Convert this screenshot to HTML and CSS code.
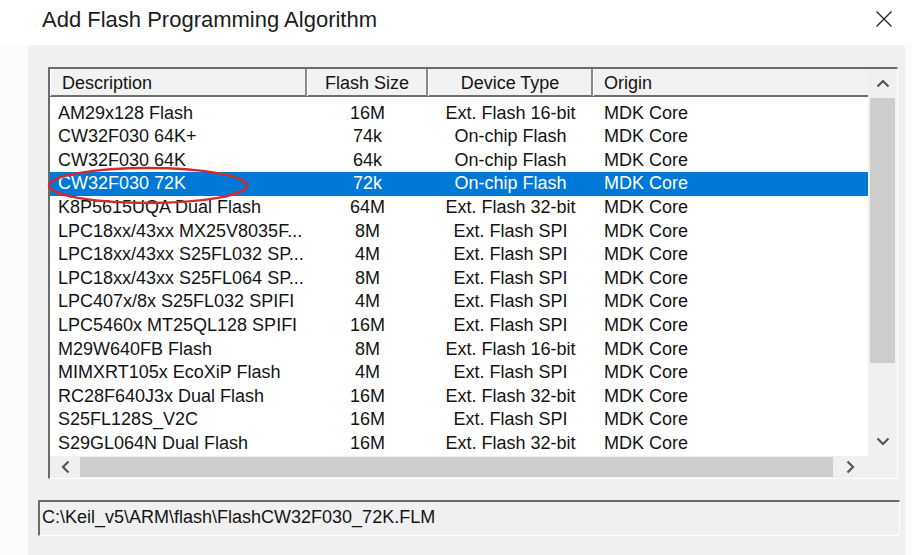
FILE: index.html
```html
<!DOCTYPE html>
<html>
<head>
<meta charset="utf-8">
<link rel="stylesheet" href="styles.css">
</head>
<body>
<div class="window">
  <div class="titlebar">
    <span class="title">Add Flash Programming Algorithm</span>
    <svg class="close" width="18" height="18" viewBox="0 0 18 18"><path d="M1.5 1.5 L16.5 16.5 M16.5 1.5 L1.5 16.5" stroke="#2b2b2b" stroke-width="1.4" fill="none"/></svg>
  </div>
  <div class="panel">
    <div class="listbox">
      <div class="lv-top">
        <div class="lv-content">
          <div class="lv-header">
            <div class="hcell c-desc">Description</div>
            <div class="hcell c-center">Flash Size</div>
            <div class="hcell c-center">Device Type</div>
            <div class="hcell c-origin">Origin</div>
          </div>
          <div class="lv-rows">
            <div class="row"><span class="c-desc">AM29x128 Flash</span><span class="c-center">16M</span><span class="c-center">Ext. Flash 16-bit</span><span class="c-origin">MDK Core</span></div>
            <div class="row"><span class="c-desc">CW32F030 64K+</span><span class="c-center">74k</span><span class="c-center">On-chip Flash</span><span class="c-origin">MDK Core</span></div>
            <div class="row"><span class="c-desc">CW32F030 64K</span><span class="c-center">64k</span><span class="c-center">On-chip Flash</span><span class="c-origin">MDK Core</span></div>
            <div class="row selected"><span class="c-desc">CW32F030 72K</span><span class="c-center">72k</span><span class="c-center">On-chip Flash</span><span class="c-origin">MDK Core</span></div>
            <div class="row"><span class="c-desc">K8P5615UQA Dual Flash</span><span class="c-center">64M</span><span class="c-center">Ext. Flash 32-bit</span><span class="c-origin">MDK Core</span></div>
            <div class="row"><span class="c-desc">LPC18xx/43xx MX25V8035F...</span><span class="c-center">8M</span><span class="c-center">Ext. Flash SPI</span><span class="c-origin">MDK Core</span></div>
            <div class="row"><span class="c-desc">LPC18xx/43xx S25FL032 SP...</span><span class="c-center">4M</span><span class="c-center">Ext. Flash SPI</span><span class="c-origin">MDK Core</span></div>
            <div class="row"><span class="c-desc">LPC18xx/43xx S25FL064 SP...</span><span class="c-center">8M</span><span class="c-center">Ext. Flash SPI</span><span class="c-origin">MDK Core</span></div>
            <div class="row"><span class="c-desc">LPC407x/8x S25FL032 SPIFI</span><span class="c-center">4M</span><span class="c-center">Ext. Flash SPI</span><span class="c-origin">MDK Core</span></div>
            <div class="row"><span class="c-desc">LPC5460x MT25QL128 SPIFI</span><span class="c-center">16M</span><span class="c-center">Ext. Flash SPI</span><span class="c-origin">MDK Core</span></div>
            <div class="row"><span class="c-desc">M29W640FB Flash</span><span class="c-center">8M</span><span class="c-center">Ext. Flash 16-bit</span><span class="c-origin">MDK Core</span></div>
            <div class="row"><span class="c-desc">MIMXRT105x EcoXiP Flash</span><span class="c-center">4M</span><span class="c-center">Ext. Flash SPI</span><span class="c-origin">MDK Core</span></div>
            <div class="row"><span class="c-desc">RC28F640J3x Dual Flash</span><span class="c-center">16M</span><span class="c-center">Ext. Flash 32-bit</span><span class="c-origin">MDK Core</span></div>
            <div class="row"><span class="c-desc">S25FL128S_V2C</span><span class="c-center">16M</span><span class="c-center">Ext. Flash SPI</span><span class="c-origin">MDK Core</span></div>
            <div class="row"><span class="c-desc">S29GL064N Dual Flash</span><span class="c-center">16M</span><span class="c-center">Ext. Flash 32-bit</span><span class="c-origin">MDK Core</span></div>
          </div>
        </div>
        <div class="vscroll">
          <div class="sbtn vbtn"><svg width="14" height="9" viewBox="0 0 14 9"><path d="M1.5 7.5 L7 2 L12.5 7.5" stroke="#555" stroke-width="2.2" fill="none"/></svg></div>
          <div class="vtrack"><div class="vthumb"></div></div>
          <div class="sbtn vbtn"><svg width="14" height="9" viewBox="0 0 14 9"><path d="M1.5 1.5 L7 7 L12.5 1.5" stroke="#555" stroke-width="2.2" fill="none"/></svg></div>
        </div>
      </div>
      <div class="lv-bottom">
        <div class="sbtn hbtn-left"><svg width="9" height="14" viewBox="0 0 9 14"><path d="M7.5 1.5 L2 7 L7.5 12.5" stroke="#555" stroke-width="2.2" fill="none"/></svg></div>
        <div class="hthumb"></div>
        <div class="sbtn hbtn-right"><svg width="9" height="14" viewBox="0 0 9 14"><path d="M1.5 1.5 L7 7 L1.5 12.5" stroke="#555" stroke-width="2.2" fill="none"/></svg></div>
        <div class="corner"></div>
      </div>
      <svg class="mark" width="204" height="40" viewBox="0 0 204 40"><ellipse cx="101" cy="19.5" rx="99" ry="17.5" stroke="#d42a2a" stroke-width="2.4" fill="none"/></svg>
    </div>
    <div class="pathfield">C:\Keil_v5\ARM\flash\FlashCW32F030_72K.FLM</div>
  </div>
</div>
</body>
</html>
```

FILE: styles.css
```css
* { box-sizing: border-box; }

html, body {
  margin: 0;
  padding: 0;
  background: #ffffff;
}

body {
  font-family: "Liberation Sans", Arial, sans-serif;
  color: #141414;
}

.window {
  width: 912px;
  height: 555px;
  overflow: hidden;
  background: #fbfbfb;
}

.titlebar {
  height: 45px;
  display: flex;
  align-items: flex-start;
  background: #ffffff;
}

.title {
  padding-left: 42px;
  padding-top: 7px;
  font-size: 22px;
  line-height: 26px;
  color: #1c1c1c;
}

.close {
  margin-left: auto;
  margin-right: 19px;
  margin-top: 10px;
}

.panel {
  margin-left: 28px;
  width: 877px;
  height: 510px;
  background: #f0f0f0;
  padding: 22px 0 0 10px;
}

.listbox {
  position: relative;
  margin-left: 10px;
  width: 850px;
  height: 412px;
  border-top: 2px solid #6b6b6b;
  border-left: 2px solid #6b6b6b;
  border-right: 1px solid #ffffff;
  border-bottom: 1px solid #ffffff;
  background: #ffffff;
  display: flex;
  flex-direction: column;
}

.lv-top {
  display: flex;
  height: 387px;
}

.lv-content {
  width: 818px;
  display: flex;
  flex-direction: column;
  background: #ffffff;
}

.lv-header {
  display: grid;
  grid-template-columns: 257px 121px 165px 275px;
  height: 28px;
  border-bottom: 2px solid #6e6e6e;
  background: #f2f2f2;
}

.hcell {
  font-size: 18px;
  line-height: 26px;
  padding-top: 1px;
  border-left: 1px solid #ffffff;
  border-right: 2px solid #8a8a8a;
  white-space: nowrap;
}

.hcell:last-child {
  border-right: none;
}

.lv-header .c-desc { padding-left: 11px; }
.lv-header .c-origin { padding-left: 10px; }

.lv-rows {
  padding-top: 4.7px;
}

.row {
  display: grid;
  grid-template-columns: 257px 121px 165px 275px;
  height: 23.6px;
  font-size: 18px;
  line-height: 23.6px;
  white-space: nowrap;
}

.row.selected {
  background: #0078d7;
  color: #ffffff;
}

.c-desc { padding-left: 8px; overflow: hidden; }
.c-center { text-align: center; }
.c-origin { padding-left: 11px; }

.vscroll {
  width: 29px;
  display: flex;
  flex-direction: column;
  background: #f0f0f0;
}

.sbtn {
  display: flex;
  align-items: center;
  justify-content: center;
  background: #f0f0f0;
}

.vbtn {
  height: 29px;
}

.vtrack {
  flex: 1;
  padding: 0 2px;
}

.vthumb {
  height: 265px;
  background: #cdcdcd;
}

.lv-bottom {
  display: flex;
  height: 22px;
  background: #f0f0f0;
}

.hbtn-left {
  width: 30px;
}

.hthumb {
  width: 753px;
  margin: 1px 0;
  background: #cdcdcd;
}

.hbtn-right {
  width: 35px;
}

.corner {
  width: 29px;
  background: #f0f0f0;
}

.mark {
  position: absolute;
  left: -3px;
  top: 97px;
  overflow: visible;
}

.pathfield {
  margin: 21px 0 0 0;
  width: 862px;
  height: 36px;
  border-top: 2px solid #6b6b6b;
  border-left: 2px solid #6b6b6b;
  border-right: 1px solid #ffffff;
  border-bottom: 1px solid #ffffff;
  background: #f0f0f0;
  font-size: 18px;
  line-height: 30px;
  padding-left: 2px;
  color: #141414;
  white-space: nowrap;
}
```
